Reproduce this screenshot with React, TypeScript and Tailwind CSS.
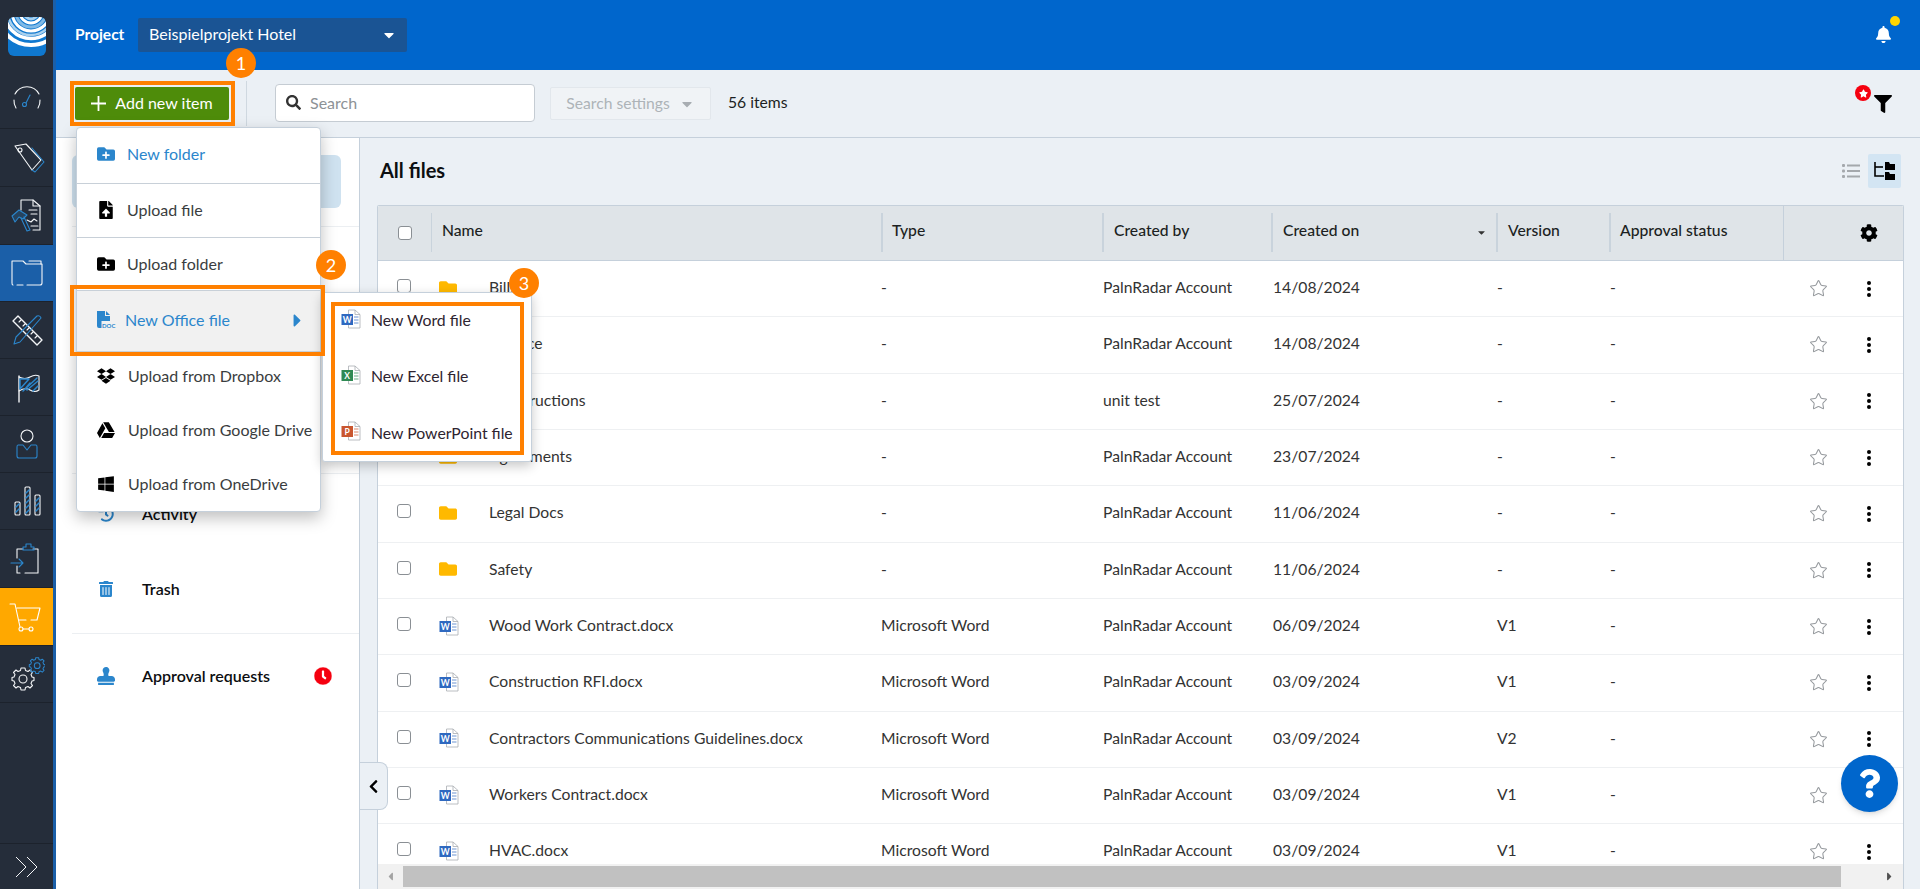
import React from "react";
import { FaDropbox, FaGoogleDrive, FaWindows, FaCog, FaFilter, FaBell, FaSearch, FaFolder, FaFolderPlus, FaFileUpload, FaCaretDown, FaCaretRight, FaCaretLeft, FaChevronLeft, FaStamp, FaTrashAlt, FaHistory, FaClock, FaStar, FaQuestion } from "react-icons/fa";
import { Star } from "lucide-react";

const W = "#f4f6f8";
const B = "#2b86cc";

function NavSvg({ children }: { children: React.ReactNode }) {
  return (
    <svg width="36" height="36" viewBox="0 0 36 36" fill="none" stroke={W} strokeWidth="1.100" strokeLinecap="round" strokeLinejoin="round">
      {children}
    </svg>
  );
}

const navIcons: { h: string; extra?: string; icon: React.ReactNode }[] = [
  { h: "h-[58px]", icon: <NavSvg><path d="M7 26 A13.500 13.500 0 0 1 5 18" /><path d="M6 12 A13.500 13.500 0 0 1 30 12" /><path d="M31 18 A13.500 13.500 0 0 1 29 26" /><circle cx="15.500" cy="22.500" r="2" stroke={B} /><path d="M17 21 L21 13" stroke={B} /></NavSvg> },
  { h: "h-[58px]", icon: <NavSvg><path d="M6 6 L17 4 L32 20 L23 30 Z" /><path d="M23 30 L26 32 L35 22 L23 8" stroke={B} /><circle cx="11" cy="10" r="2" /></NavSvg> },
  { h: "h-[58px]", icon: <NavSvg><path d="M12 12 V2 H24 L31 8 V32 H24" /><path d="M24 2 V8 H31" /><path d="M20 12 H28 M22 16 H28 M22 28 H29" /><path d="M18 22 L22 24 L25 21 L28 23" /><path d="M3 18 L10 12 L18 17 L14 21 L10 19 L6 24 Z" stroke={B} fill="#2b86cc40" /><path d="M12 20 L18 33 L21 32 L15 19" stroke={B} /></NavSvg> },
  { h: "h-[57px]", extra: "bg-[#1b5fa8]", icon: <NavSvg><path d="M4 30 Q3 30 3 28 V6 H14 L17 9 H33 V28 Q33 30 31 30 H18" /><path d="M14 30 H8" /><path d="M20 6 H32 V9" /></NavSvg> },
  { h: "h-[57px]", icon: <NavSvg><path d="M4 9 L9 4 L33 28 L28 33 Z" strokeWidth="1.400" /><path d="M10 10 L12 8 M14 14 L16 12 M18 18 L20 16 M22 22 L24 20 M26 26 L28 24" /><path d="M5 32 L7 25 L28 4 Q31 3 32 6 L11 30 Z" stroke={B} fill="none" /></NavSvg> },
  { h: "h-[57px]", icon: <NavSvg><path d="M10 7 V33" strokeWidth="1.400" /><path d="M10 8 Q16 11 21 8 T30 7 V21 Q26 24 21 21 T10 22" /><path d="M11 10 L20 10 L11 20 Z M14 22 L28 9 M18 21 L29 12 M24 22 L29 17 M21 14 L16 20" stroke={B} strokeWidth="1.500" /></NavSvg> },
  { h: "h-[57px]", icon: <NavSvg><circle cx="18" cy="10" r="6" /><path d="M9 19 H14 L18 24 L22 19 H27 Q28 19 28 21 V30 Q28 32 26 32 H10 Q8 32 8 30 V21 Q8 19 9 19 Z" stroke={B} /></NavSvg> },
  { h: "h-[57px]", icon: <NavSvg><rect x="6" y="19" width="5" height="13" rx="1" /><rect x="16" y="4" width="5" height="28" rx="1" /><rect x="26" y="12" width="5" height="20" rx="1" /><path d="M7 24 L10 21 M7 29 L10 26 M17 10 L20 7 M17 15 L20 12 M17 20 L20 17 M17 25 L20 22 M17 30 L20 27 M27 18 L30 15 M27 23 L30 20 M27 28 L30 25" stroke={B} strokeWidth="1.500" /></NavSvg> },
  { h: "h-[58px]", icon: <NavSvg><path d="M14 8 H8 V17 M8 25 V32 H11 M16 32 H29 V8 H24" /><path d="M14 6 H17 V3 H22 V6 H25 V9 H14 Z" stroke={B} /><path d="M2 22 H13 M10 18 L14 22 L10 26" stroke={B} /></NavSvg> },
  { h: "h-[58px]", extra: "bg-[#ffa800]", icon: <svg width="36" height="36" viewBox="0 0 36 36" fill="none" stroke="#fff" strokeWidth="1.100" strokeLinecap="round" strokeLinejoin="round"><path d="M1 5 H6 L11 28 M8 9 H31 L28 21 H22 M17 21 H10" /><circle cx="12" cy="30" r="2" /><circle cx="22" cy="30" r="2" /><path d="M14 30 H20" /></svg> },
  { h: "h-[57px]", icon: <NavSvg><g transform="translate(4 11)"><path d="M8 1 H12 L12.500 3.500 L15 4.500 L17 3 L19.500 5.500 L18 7.500 L19 10 L21 10.500 V13.500 L19 14 L18 16.500 L19.500 18.500 L17 21 L15 19.500 L12.500 20.500 L12 23 H8 L7.500 20.500 L5 19.500 L3 21 L0.500 18.500 L2 16.500 L1 14 L-1 13.500 V10.500 L1 10 L2 7.500 L0.500 5.500 L3 3 L5 4.500 L7.500 3.500 Z" /><circle cx="10" cy="12" r="4" /></g><g transform="translate(21 1) scale(0.72)" stroke={B} strokeWidth="1.400"><path d="M8 1 H12 L12.500 3.500 L15 4.500 L17 3 L19.500 5.500 L18 7.500 L19 10 L21 10.500 V13.500 L19 14 L18 16.500 L19.500 18.500 L17 21 L15 19.500 L12.500 20.500 L12 23 H8 L7.500 20.500 L5 19.500 L3 21 L0.500 18.500 L2 16.500 L1 14 L-1 13.500 V10.500 L1 10 L2 7.500 L0.500 5.500 L3 3 L5 4.500 L7.500 3.500 Z" /><circle cx="10" cy="12" r="4" /></g></NavSvg> },
];

function Logo() {
  return (
    <svg width="38" height="39" viewBox="0 0 38 39">
      <defs>
        <clipPath id="lg"><rect width="38" height="39" rx="6" /></clipPath>
      </defs>
      <g clipPath="url(#lg)">
        <rect width="38" height="39" fill="#0f78cf" />
        <g fill="none">
          <circle cx="23" cy="-5" r="7" stroke="#a8d0ee" strokeWidth="3" />
          <circle cx="23" cy="-5" r="11" stroke="#fff" strokeWidth="3" />
          <circle cx="23" cy="-5" r="15" stroke="#7fb9e6" strokeWidth="3" />
          <circle cx="23" cy="-5" r="19" stroke="#fff" strokeWidth="3" />
          <circle cx="23" cy="-5" r="23" stroke="#a8d0ee" strokeWidth="2.500" />
          <circle cx="23" cy="-5" r="26.500" stroke="#fff" strokeWidth="3.500" />
          <circle cx="23" cy="-5" r="33" stroke="#fff" strokeWidth="4" />
        </g>
      </g>
    </svg>
  );
}

function OfficeIcon({ color, letter, size = 20 }: { color: string; letter: string; size?: number }) {
  return (
    <svg width={size} height={size} viewBox="0 0 20 20" className="shrink-0">
      <path d="M7.500 1 H14 L19 5.500 V19 H7.500 Z" fill="#fff" stroke="#a9adb3" strokeWidth="0.800" />
      <path d="M14 1 V5.500 H19" fill="none" stroke="#a9adb3" strokeWidth="0.800" />
      <path d="M13 8 H17.500 M13 11 H17.500 M13 14 H17.500" stroke={color} strokeWidth="1" opacity="0.7" />
      <rect x="0.500" y="5" width="11.500" height="11" fill={color} />
      <text x="6.200" y="13.600" fontSize="8.500" fontWeight="700" fill="#fff" textAnchor="middle" fontFamily="Lato, sans-serif">{letter}</text>
    </svg>
  );
}

const word = <OfficeIcon color="#2f69c0" letter="W" />;

function Annot({ n, cls }: { n: number; cls: string }) {
  return (
    <div className={`absolute z-40 w-[30px] h-[30px] rounded-full bg-[#ff8000] text-white text-[18px] flex items-center justify-center ${cls}`}>{n}</div>
  );
}

function Cb({ cls = "" }: { cls?: string }) {
  return <span className={`block w-[14px] h-[14px] rounded-[3px] border border-[#8a8f94] bg-white ${cls}`} />;
}

function Dots() {
  return (
    <span className="flex flex-col gap-[2px]">
      <span className="w-[4px] h-[4px] rounded-full bg-black" />
      <span className="w-[4px] h-[4px] rounded-full bg-black" />
      <span className="w-[4px] h-[4px] rounded-full bg-black" />
    </span>
  );
}

const pr = "PalnRadar Account";
const rows = [
  ["Bills", "-", pr, "14/08/2024", "-"],
  ["Finance", "-", pr, "14/08/2024", "-"],
  ["Constructions", "-", "unit test", "25/07/2024", "-"],
  ["Agreements", "-", pr, "23/07/2024", "-"],
  ["Legal Docs", "-", pr, "11/06/2024", "-"],
  ["Safety", "-", pr, "11/06/2024", "-"],
  ["Wood Work Contract.docx", "Microsoft Word", pr, "06/09/2024", "V1"],
  ["Construction RFI.docx", "Microsoft Word", pr, "03/09/2024", "V1"],
  ["Contractors Communications Guidelines.docx", "Microsoft Word", pr, "03/09/2024", "V2"],
  ["Workers Contract.docx", "Microsoft Word", pr, "03/09/2024", "V1"],
  ["HVAC.docx", "Microsoft Word", pr, "03/09/2024", "V1"],
];

function Head({ label, w, pl = "pl-[10px]", sep = "short", children }: { label?: string; w: string; pl?: string; sep?: string; children?: React.ReactNode }) {
  return (
    <div className={`relative h-full flex items-center shrink-0 pb-[5px] text-[15.700px] text-[#1c1f22] font-medium ${pl} ${w}`}>
      {label}
      {children}
      {sep === "short" && <span className="absolute right-0 top-[7px] bottom-[8px] w-[2px] bg-[#c9d3dc]" />}
      {sep === "full" && <span className="absolute right-0 top-0 bottom-0 w-px bg-[#c5d0db]" />}
    </div>
  );
}

function MenuItem({ icon, label, cls, text = "text-[#3a3d40]", pl = "pl-[20px]", gap = "gap-[12px]" }: { icon: React.ReactNode; label: string; cls: string; text?: string; pl?: string; gap?: string }) {
  return (
    <div className={`flex items-center text-[16px] ${pl} ${gap} ${text} ${cls}`}>
      <span className="w-[18px] flex justify-center shrink-0">{icon}</span>
      {label}
    </div>
  );
}

export default function App() {
  return (
    <div className="relative flex h-[889px] w-[1920px] overflow-hidden bg-white text-[15.700px] text-[#333]" style={{ fontFamily: "Lato, sans-serif" }}>
      {/* sidebar */}
      <aside className="w-[56px] shrink-0 bg-[#252d3a] border-r-[3px] border-[#1b5fa8] flex flex-col">
        <div className="h-[71px] shrink-0 flex justify-center pt-[17px]"><Logo /></div>
        {navIcons.map((n, i) => (
          <div key={i} className={`shrink-0 flex items-center justify-center border-b border-[#1c222c] ${n.h} ${n.extra ?? ""}`}>{n.icon}</div>
        ))}
        <div className="flex-1 border-b border-[#1c222c]" />
        <div className="h-[45px] shrink-0 flex items-center justify-center">
          <svg width="24" height="24" viewBox="0 0 24 24" fill="none" stroke={W} strokeWidth="1"><path d="M1 2 L11 12 L1 22 M12 2 L22 12 L12 22" /></svg>
        </div>
      </aside>

      <div className="flex-1 min-w-0 flex flex-col">
        {/* header */}
        <header className="h-[70px] shrink-0 bg-[#0066cc] flex items-center pl-[19px] pr-[28px] pb-[1px]">
          <span className="font-bold text-white text-[15.500px] w-[63px]">Project</span>
          <div className="w-[269px] h-[34px] rounded-[2px] bg-[#1a5494] text-white text-[16px] flex items-center justify-between pl-[11px] pr-[10px]">
            <span className="-mt-[1px]">Beispielprojekt Hotel</span>
            <FaCaretDown className="text-white" size={16} />
          </div>
          <div className="ml-auto relative">
            <FaBell className="text-white" size={17} />
            <span className="absolute -top-[10px] -right-[8px] w-[10px] h-[10px] rounded-full bg-[#ffd500]" />
          </div>
        </header>

        {/* toolbar */}
        <div className="h-[68px] shrink-0 bg-[#ebf0f5] border-b border-[#c5d0db] flex items-center pl-[19px] pr-[28px]">
          <button className="w-[154px] h-[33px] mb-[1px] rounded-[2px] bg-[#4e8c0a] text-white text-[16px] flex items-center justify-center gap-[9px]">
            <svg width="15" height="15" viewBox="0 0 15 15" stroke="#fff" strokeWidth="1.800"><path d="M7.500 0 V15 M0 7.500 H15" /></svg>
            Add new item
          </button>
          <span className="w-px h-[45px] bg-[#cfd8e0] ml-[17px] mb-[1px]" />
          <div className="ml-[28px] w-[260px] h-[38px] mb-[1px] rounded-[4px] border border-[#c5ccd3] bg-white flex items-center pl-[10px] gap-[9px] text-[#8d9296] text-[16px]">
            <FaSearch size={15} className="text-[#333] -mt-[1px]" />
            <span className="-mt-[1px]">Search</span>
          </div>
          <div className="ml-[15px] w-[161px] h-[33px] rounded-[2px] border border-[#e2e7ec] bg-[#f0f3f6] flex items-center justify-center gap-[9px] text-[#adb3b8] text-[15.700px]">
            Search settings
            <FaCaretDown size={16} className="text-[#a8adb2]" />
          </div>
          <span className="ml-[17px] -mt-[1px] text-[15.700px] text-[#1c1f22]">56 items</span>
          <div className="ml-auto relative mt-[1px]">
            <FaFilter size={18} className="text-black" />
            <span className="absolute -top-[10px] -left-[19px] w-[16px] h-[16px] rounded-full bg-[#f5000f] flex items-center justify-center">
              <FaStar size={9} className="text-white" />
            </span>
          </div>
        </div>

        {/* body */}
        <div className="flex-1 min-h-0 flex">
          <div className="w-[304px] shrink-0 bg-white border-r border-[#c5d0db] pt-[17px] pl-[16px] flex flex-col">
            <div className="w-[269px] h-[53px] rounded-[6px] bg-[#cfe2f0] shrink-0" />
            <div className="h-px bg-[#eceff2] mt-[18px] shrink-0" />
            <div className="h-[246px] shrink-0" />
            <div className="h-px bg-[#eceff2] shrink-0" />
            <div className="flex items-center h-[74px] mt-[3px] pl-[26px] gap-[28px] font-semibold text-[16px] text-[#0c0e10] shrink-0">
              <FaHistory size={16} className="text-[#2b86cc]" />
              Activity
            </div>
            <div className="flex items-center h-[74px] mt-[1px] pl-[26px] gap-[28px] font-semibold text-[16px] text-[#0c0e10] shrink-0">
              <FaTrashAlt size={16} className="text-[#2b86cc]" />
              Trash
            </div>
            <div className="h-px bg-[#eceff2] mt-[7px] shrink-0" />
            <div className="flex items-center h-[83px] pl-[25px] gap-[27px] text-[16px] font-semibold text-[#0c0e10] shrink-0">
              <FaStamp size={18} className="text-[#2b86cc]" />
              <span>Approval requests</span>
              <span className="ml-[17px] w-[18px] h-[18px] rounded-full bg-[#f5000f] flex items-center justify-center">
                <FaClock size={18} className="text-[#f5000f] bg-white rounded-full" />
              </span>
            </div>
          </div>

          {/* main */}
          <main className="flex-1 min-w-0 bg-[#ebf0f5] flex flex-col pl-[17px] pr-[16px]">
            <div className="h-[67px] shrink-0 flex items-center pl-[3px]">
              <h1 className="text-[20px] font-bold text-[#0d0f11] -mt-[4px]">All files</h1>
              <div className="ml-auto flex items-center gap-[8px] pr-[3px] mb-[1px]">
                <svg width="18" height="16" viewBox="0 0 18 16" className="text-[#a4a8ac]" fill="currentColor"><rect x="0" y="1" width="3" height="3" rx="1" /><rect x="0" y="6.500" width="3" height="3" rx="1" /><rect x="0" y="12" width="3" height="3" rx="1" /><rect x="5" y="1.500" width="13" height="2" /><rect x="5" y="7" width="13" height="2" /><rect x="5" y="12.500" width="13" height="2" /></svg>
                <div className="w-[33px] h-[34px] rounded-[2px] bg-[#d3e5f3] flex items-center justify-center">
                  <svg width="21" height="18" viewBox="0 0 21 18" fill="#000"><path d="M1 0 V14 H10" fill="none" stroke="#000" strokeWidth="1.600" /><path d="M1 5 H9" stroke="#000" strokeWidth="1.600" /><path d="M11 0 H15 L16 2 H21 V8 H11 Z M11 10 H15 L16 12 H21 V18 H11 Z" /></svg>
                </div>
              </div>
            </div>

            <div className="flex-1 min-h-0 flex flex-col bg-white border-x border-t border-[#c5d0db] rounded-t-[2px] overflow-hidden">
              <div className="h-[55px] shrink-0 bg-[#dfe4e8] border-b border-[#c5d0db] flex">
                <div className="relative w-[54px] shrink-0 h-full flex items-center pl-[20px]">
                  <Cb cls="mb-[1px]" />
                  <span className="absolute right-0 top-[7px] bottom-[8px] w-[1px] bg-[#c9d3dc]" />
                </div>
                <Head label="Name" w="w-[451px]" />
                <Head label="Type" w="w-[221px]" pl="pl-[9px]" />
                <Head label="Created by" w="w-[169px]" />
                <Head label="Created on" w="w-[225px]">
                  <FaCaretDown size={11} className="absolute right-[11px] top-[21px] text-[#333]" />
                </Head>
                <Head label="Version" w="w-[113px]" />
                <Head label="Approval status" w="w-[173px]" pl="pl-[9px]" sep="full" />
                <div className="flex-1 flex items-center justify-end pr-[25px]"><FaCog size={18} className="text-black" /></div>
              </div>

              <div className="flex-1 min-h-0 overflow-hidden">
                {rows.map((r, i) => (
                  <div key={i} className="h-[56.330px] pb-[2px] grid grid-cols-[57px_54px_392px_222px_170px_224px_113px_195px_27px_1fr] items-center border-b border-[#eef0f2]">
                    <div className="pl-[19px] -mt-[3px]"><Cb /></div>
                    <div className="pl-[4px]">
                      {i < 6 ? <FaFolder size={18} className="text-[#ffb900]" /> : word}
                    </div>
                    <div className="whitespace-nowrap">{r[0]}</div>
                    <div>{r[1]}</div>
                    <div>{r[2]}</div>
                    <div>{r[3]}</div>
                    <div>{r[4]}</div>
                    <div>-</div>
                    <div className="flex justify-center mt-[2px]"><Star size={19} strokeWidth={1.300} className="text-[#94989c]" /></div>
                    <div className="pl-[35px] mt-[2px]"><Dots /></div>
                  </div>
                ))}
              </div>

              <div className="h-[25px] shrink-0 bg-[#f1f1f1] flex items-center pl-[6px] pr-[7px]">
                <FaCaretLeft size={13} className="text-[#a3a3a3]" />
                <div className="ml-[6px] w-[1438px] h-[21px] bg-[#c1c1c1]" />
                <FaCaretRight size={13} className="ml-auto text-[#505050]" />
              </div>
            </div>
          </main>
        </div>
      </div>

      {/* collapse tab */}
      <div className="absolute left-[360px] top-[762px] w-[28px] h-[48px] bg-[#ebf0f5] border border-l-0 border-[#c5d0db] rounded-r-[8px] flex items-center justify-start pl-[6px] z-10">
        <FaChevronLeft size={15} className="text-black" />
      </div>

      {/* help */}
      <div className="absolute left-[1841px] top-[755px] w-[57px] h-[57px] rounded-full bg-[#0066cc] shadow-md flex items-center justify-center z-10">
        <FaQuestion size={29} className="text-white" />
      </div>

      {/* add menu */}
      <div className="absolute left-[76px] top-[127px] w-[245px] h-[385px] bg-white rounded-[4px] border border-[#c5d0db] shadow-[0_6px_16px_rgba(0,0,0,0.25)] z-20 flex flex-col">
        <MenuItem cls="h-[56px] pb-[4px] border-b border-[#c8d0d8]" text="text-[#2b86cc]" icon={<FaFolderPlus size={18} className="text-[#2b86cc]" />} label="New folder" />
        <MenuItem cls="h-[54px] pb-[1px] border-b border-[#c8d0d8]" icon={<FaFileUpload size={18} className="text-black" />} label="Upload file" />
        <MenuItem cls="h-[52px]" icon={<FaFolderPlus size={18} className="text-black" />} label="Upload folder" />
        <MenuItem
          cls="h-[62px] pb-[2px] bg-[#f1f1f1] border-y border-[#c8d0d8] relative"
          text="text-[#2b86cc]"
          gap="gap-[10px]"
          icon={
            <svg width="20" height="20" viewBox="0 0 20 20" fill="#2b86cc" className="shrink-0 overflow-visible"><path d="M1 1 H9 V6 H14 V11 H5.500 V18 H3 Q1 18 1 16 Z" /><path d="M10 1 L14 5 H10 Z" /><text x="6" y="18" fontSize="6" fontWeight="700" fontFamily="Lato, sans-serif">DOC</text></svg>
          }
          label="New Office file"
        />
        <MenuItem cls="h-[54px] -mt-[3px]" gap="gap-[13px]" icon={<FaDropbox size={18} className="text-black" />} label="Upload from Dropbox" />
        <MenuItem cls="h-[54px]" gap="gap-[13px]" icon={<FaGoogleDrive size={18} className="text-black" />} label="Upload from Google Drive" />
        <MenuItem cls="h-[54px] pb-[1px]" gap="gap-[13px]" icon={<FaWindows size={18} className="text-black" />} label="Upload from OneDrive" />
        <FaCaretRight size={21} className="absolute left-[210px] top-[182px] text-[#2b86cc]" />
      </div>

      {/* office submenu */}
      <div className="absolute left-[322px] top-[292px] w-[210px] h-[170px] bg-white rounded-[3px] border border-[#c5d0db] shadow-[0_4px_12px_rgba(0,0,0,0.22)] z-20 flex flex-col pt-[16px] pl-[18px] text-[15.800px] text-[#2e2430]">
        <div className="h-[56px] flex gap-[10px] items-start"><OfficeIcon color="#2f69c0" letter="W" /><span className="-mt-[1px]">New Word file</span></div>
        <div className="h-[57px] flex gap-[10px] items-start"><OfficeIcon color="#2f8a54" letter="X" /><span className="-mt-[1px]">New Excel file</span></div>
        <div className="h-[40px] flex gap-[10px] items-start"><OfficeIcon color="#c9562f" letter="P" /><span>New PowerPoint file</span></div>
      </div>

      {/* annotations */}
      <div className="absolute left-[70px] top-[81px] w-[165px] h-[45px] border-[4px] border-[#ff8000] z-30" />
      <div className="absolute left-[70px] top-[285px] w-[255px] h-[71px] border-[4px] border-[#ff8000] z-30" />
      <div className="absolute left-[331px] top-[302px] w-[193px] h-[153px] border-[4px] border-[#ff8000] z-30" />
      <Annot n={1} cls="left-[226px] top-[48px]" />
      <Annot n={2} cls="left-[316px] top-[250px]" />
      <Annot n={3} cls="left-[509px] top-[268px]" />
    </div>
  );
}
